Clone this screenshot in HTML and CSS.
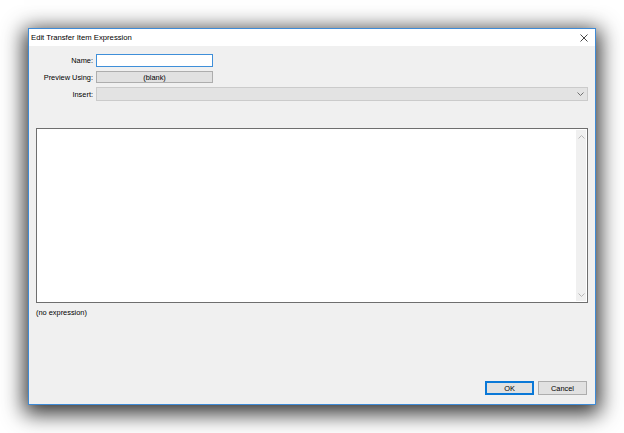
FILE: index.html
```html
<!DOCTYPE html>
<html>
<head>
<meta charset="utf-8">
<link rel="stylesheet" href="styles.css">
</head>
<body>
<div class="window">
  <div class="titlebar">
    <span class="title">Edit Transfer Item Expression</span>
    <svg class="close" width="8" height="8" viewBox="0 0 8 8"><path d="M0.5 0.5 L7.5 7.5 M7.5 0.5 L0.5 7.5" stroke="#333" stroke-width="0.9" fill="none"/></svg>
  </div>
  <div class="content">
    <div class="form">
      <label class="lbl">Name:</label>
      <div class="textbox"></div>
      <label class="lbl">Preview Using:</label>
      <div class="btn preview">(blank)</div>
      <label class="lbl">Insert:</label>
      <div class="combo">
        <svg class="chev" width="7" height="4" viewBox="0 0 7 4"><path d="M0.5 0.5 L3.5 3.5 L6.5 0.5" stroke="#707070" stroke-width="1" fill="none"/></svg>
      </div>
    </div>
    <div class="editor">
      <div class="edit-area"></div>
      <div class="vscroll">
        <svg width="7" height="4" viewBox="0 0 7 4"><path d="M0.5 3.5 L3.5 0.5 L6.5 3.5" stroke="#b8b8b8" stroke-width="1" fill="none"/></svg>
        <svg width="7" height="4" viewBox="0 0 7 4"><path d="M0.5 0.5 L3.5 3.5 L6.5 0.5" stroke="#b8b8b8" stroke-width="1" fill="none"/></svg>
      </div>
    </div>
    <div class="status">(no expression)</div>
    <div class="buttons">
      <div class="btn dlg default">OK</div>
      <div class="btn dlg">Cancel</div>
    </div>
  </div>
</div>
</body>
</html>
```
FILE: styles.css
```css
html, body {
  margin: 0;
  padding: 0;
  background: #ffffff;
}
body {
  font-family: "Liberation Sans", Arial, sans-serif;
  font-size: 7.4px;
  color: #000;
  padding: 28px 0 0 28px;
  height: 433px;
  box-sizing: border-box;
}
.window {
  box-sizing: border-box;
  width: 568px;
  height: 377px;
  border: 1px solid #3f8bd6;
  background: #f0f0f0;
  display: flex;
  flex-direction: column;
  box-shadow: 0 5px 20px 4px rgba(0, 0, 0, 0.8);
}
.titlebar {
  height: 17px;
  background: #ffffff;
  display: flex;
  align-items: center;
  justify-content: space-between;
  padding: 0 7px 0 2px;
}
.title {
  font-size: 7.7px;
  color: #000;
}
.close {
  display: block;
}
.content {
  flex: 1;
  display: flex;
  flex-direction: column;
  padding: 8px 7px 9px 7px;
}
.form {
  display: grid;
  grid-template-columns: 57px 1fr;
  column-gap: 3px;
  grid-template-rows: 13px 12px 14px;
  row-gap: 4px;
  align-items: stretch;
}
.form .lbl {
  text-align: right;
  align-self: center;
  white-space: nowrap;
  color: #000;
}
.textbox {
  box-sizing: border-box;
  width: 117px;
  background: #fff;
  border: 1px solid #3f8fd9;
}
.btn {
  box-sizing: border-box;
  display: flex;
  align-items: center;
  justify-content: center;
  background: #e1e1e1;
  border: 1px solid #adadad;
}
.preview {
  width: 117px;
}
.combo {
  box-sizing: border-box;
  background: #e3e3e3;
  border: 1px solid #cbcbcb;
  display: flex;
  align-items: center;
  justify-content: flex-end;
  padding-right: 3px;
}
.chev {
  display: block;
}
.editor {
  box-sizing: border-box;
  margin-top: 27px;
  height: 175px;
  border: 1px solid #6e6e6e;
  background: #fff;
  display: flex;
}
.edit-area {
  flex: 1;
}
.vscroll {
  width: 10px;
  margin: 1px 1px 1px 0;
  background: #f0f0f0;
  display: flex;
  flex-direction: column;
  justify-content: space-between;
  align-items: center;
  padding: 5px 0 4px 0;
}
.vscroll svg {
  display: block;
}
.status {
  margin-top: 5px;
  line-height: 10px;
}
.buttons {
  margin-top: auto;
  display: flex;
  justify-content: flex-end;
  gap: 4px;
  padding-right: 1px;
}
.dlg {
  width: 49px;
  height: 14px;
}
.default {
  border: 1px solid #0a78d7;
  box-shadow: inset 0 0 0 1px #0a78d7;
}
```
